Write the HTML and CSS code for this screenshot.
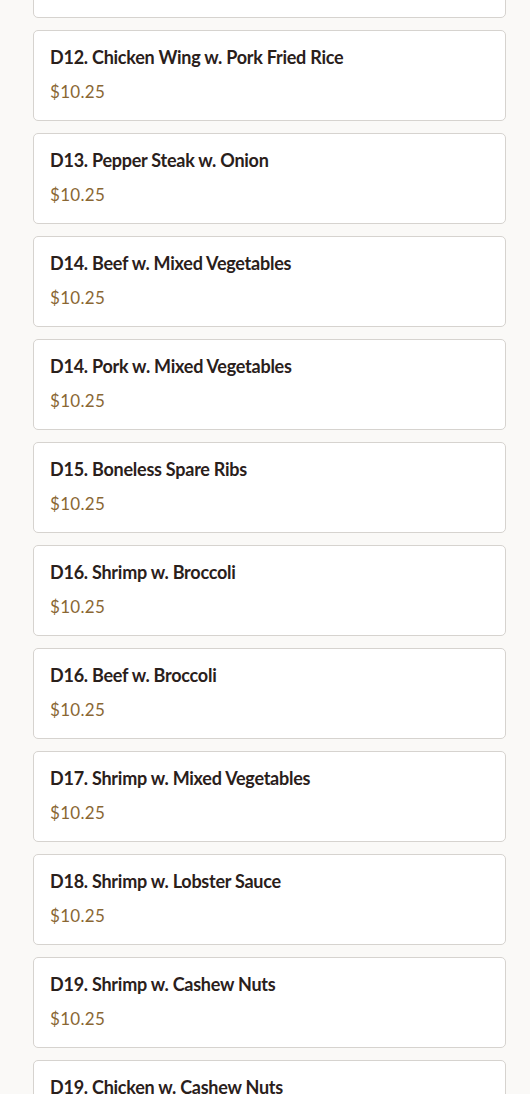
FILE: index.html
```html
<!DOCTYPE html>
<html>
<head>
<meta charset="utf-8">
<link rel="stylesheet" href="styles.css">
</head>
<body>
<div class="list">
  <div class="card card-first"><div class="title">D11. Chicken w. Broccoli</div><div class="price">$10.25</div></div>
  <div class="card"><div class="title">D12. Chicken Wing w. Pork Fried Rice</div><div class="price">$10.25</div></div>
  <div class="card"><div class="title">D13. Pepper Steak w. Onion</div><div class="price">$10.25</div></div>
  <div class="card"><div class="title">D14. Beef w. Mixed Vegetables</div><div class="price">$10.25</div></div>
  <div class="card"><div class="title">D14. Pork w. Mixed Vegetables</div><div class="price">$10.25</div></div>
  <div class="card"><div class="title">D15. Boneless Spare Ribs</div><div class="price">$10.25</div></div>
  <div class="card"><div class="title">D16. Shrimp w. Broccoli</div><div class="price">$10.25</div></div>
  <div class="card"><div class="title">D16. Beef w. Broccoli</div><div class="price">$10.25</div></div>
  <div class="card"><div class="title">D17. Shrimp w. Mixed Vegetables</div><div class="price">$10.25</div></div>
  <div class="card"><div class="title">D18. Shrimp w. Lobster Sauce</div><div class="price">$10.25</div></div>
  <div class="card"><div class="title">D19. Shrimp w. Cashew Nuts</div><div class="price">$10.25</div></div>
  <div class="card"><div class="title">D19. Chicken w. Cashew Nuts</div><div class="price">$10.25</div></div>
</div>
</body>
</html>
```
FILE: styles.css
```css
html, body {
  margin: 0;
  padding: 0;
  background: #faf9f7;
}
body {
  font-family: "Lato", "Noto Sans", sans-serif;
  overflow: hidden;
  height: 1094px;
}
.list {
  display: flex;
  flex-direction: column;
  gap: 12px;
  padding: 0 24px 0 33px;
}
.card {
  box-sizing: border-box;
  height: 91px;
  background: #ffffff;
  border: 1px solid #d6d3cf;
  border-radius: 5px;
  padding: 14px 16px 0 16px;
  display: flex;
  flex-direction: column;
  gap: 11px;
}
.card-first {
  margin-top: -73px;
}
.title {
  font-size: 18px;
  font-weight: 700;
  color: #2a201b;
  line-height: 24px;
  letter-spacing: -0.25px;
}
.price {
  font-size: 17px;
  font-weight: 400;
  color: #8a6733;
  line-height: 24px;
  letter-spacing: 0.3px;
}
```
